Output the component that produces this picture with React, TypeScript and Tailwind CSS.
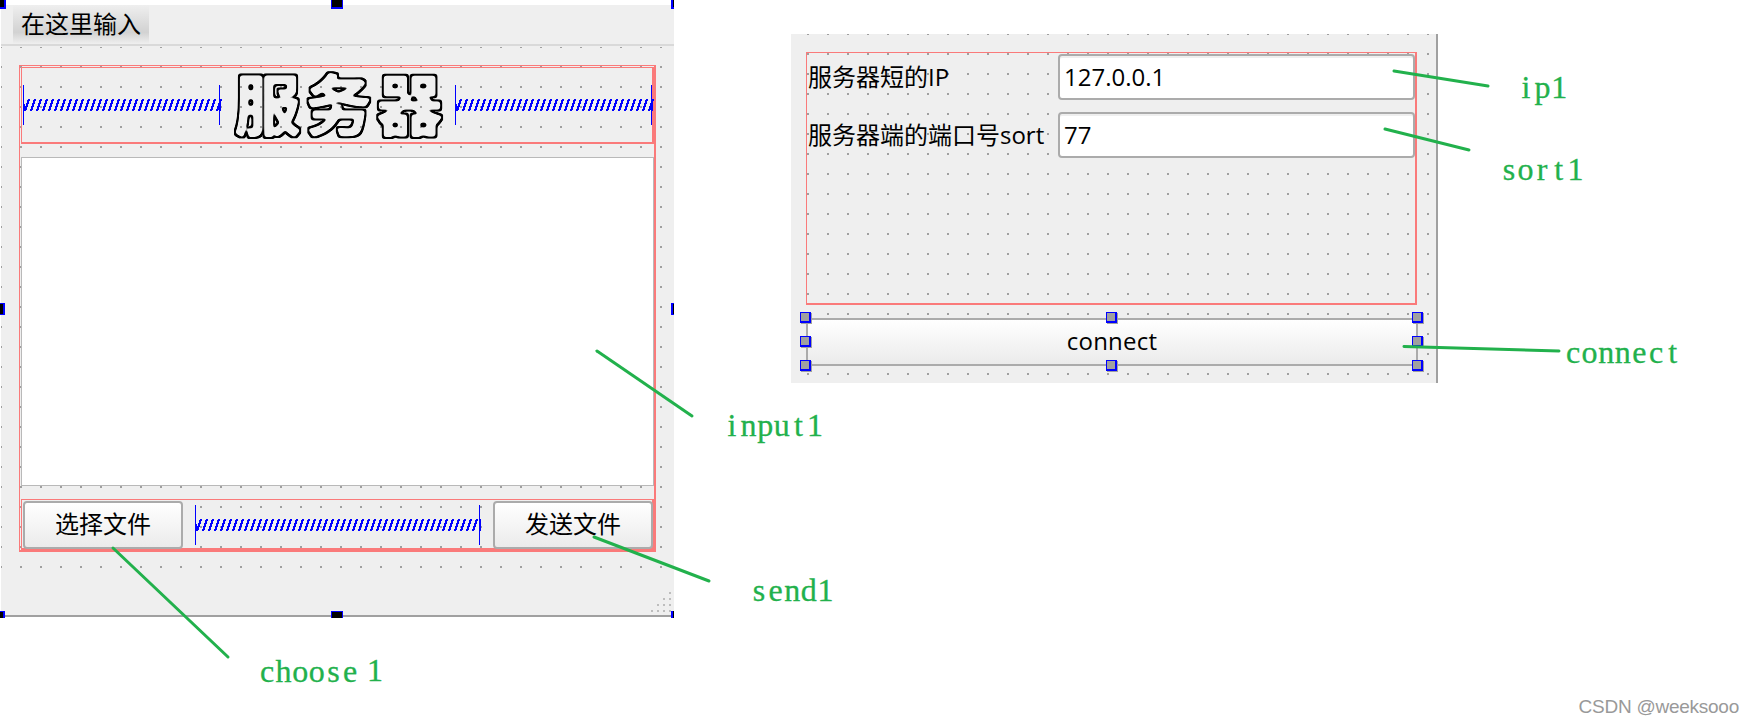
import React from 'react';

const UI_FONT = "font-['Open_Sans','Noto_Sans_CJK_SC',sans-serif]";
const DOTS = 'bg-[conic-gradient(at_2px_2px,transparent_75%,#a0a0a0_0)] bg-[length:20px_20px]';
const LAYOUT_BOX = 'border-t border-l border-r-2 border-b-2 border-[#fa7a7a]';

function Spacer({ width, className = '' }: { width: number; className?: string }) {
  const strokes: number[] = [];
  for (let x = 1; x < width - 3; x += 6) strokes.push(x);
  return (
    <svg
      className={`h-[40px] shrink-0 overflow-visible ${className}`}
      width={width}
      height={40}
      shapeRendering="crispEdges"
      stroke="#0000ff"
      fill="none"
    >
      <path d={`M0.5 0V40M${width - 0.5} 0V40`} strokeWidth="1" />
      <path d="M1 25V19" strokeWidth="1" />
      <path d={strokes.map((x) => `M${x + 1} 26L${x + 5} 14`).join('')} strokeWidth="2" />
      <path d={`M${width - 0.5} 14V26`} strokeWidth="2" />
    </svg>
  );
}

function PushButton({ children, className = '' }: { children: React.ReactNode; className?: string }) {
  return (
    <button
      className={`h-[48px] shrink-0 rounded-[4px] border-2 border-[#ababab] bg-linear-to-b from-white to-[#ebebeb] pb-[2px] text-center text-[24px] leading-[42px] text-black ${className}`}
    >
      {children}
    </button>
  );
}

function Field({ value }: { value: string }) {
  return (
    <div className="h-[46px] w-[358px] rounded-[4px] border-2 border-[#ababab] bg-white pl-[4px] text-[24px] leading-[41px] shadow-[inset_0_2px_0_#efefef]">
      {value}
    </div>
  );
}

function FormRow({ label, value }: { label: string; value: string }) {
  return (
    <div className="flex h-[46px] items-center">
      <span className="w-[251px] shrink-0 pl-px text-[24px] whitespace-nowrap">{label}</span>
      <Field value={value} />
    </div>
  );
}

function Handle({ className }: { className: string }) {
  return (
    <i
      className={`absolute h-[11px] w-[11px] border-t border-l border-r-2 border-b-2 border-[#0000ff] bg-[#a0a0a0] shadow-[1px_1px_0_#a0a0a0] ${className}`}
    />
  );
}

function FormHandle({ className }: { className: string }) {
  return <i className={`absolute border-[#0000ff] bg-black ${className}`} />;
}

function ServerForm() {
  return (
    <section className="relative ml-px mt-[5px] flex h-[612px] w-[673px] shrink-0 flex-col border-b-2 border-[#a0a0a0] bg-[#efefef]">
      <header className="flex h-[41px] shrink-0 items-start border-b-2 border-[#d9d9d9] pl-[12px]">
        <div className="h-[39px] w-[136px] bg-linear-to-b from-[#efefef] via-[#d2d2d2] via-70% to-[#efefef] pl-[8px] text-[24px] leading-[38px] whitespace-nowrap">
          在这里输入
        </div>
      </header>
      <div className={`mt-px h-[539px] shrink-0 pl-[18px] pt-[18px] bg-[position:-1px_-1px] ${DOTS}`}>
        <div className={`flex h-[487px] w-[637px] flex-col gap-[13px] pl-px pt-px ${LAYOUT_BOX}`}>
          <div className={`flex h-[77px] w-[633px] shrink-0 items-start pl-px ${LAYOUT_BOX}`}>
            <Spacer width={197} className="mt-[17px]" />
            <h1 className="-mt-[5px] flex h-[77px] w-[235px] shrink-0 items-center justify-center pl-[7px] font-['Noto_Sans_CJK_SC',sans-serif] text-[66px] leading-[77px] font-bold tracking-[5px] whitespace-nowrap [-webkit-text-stroke:1.2px_black] [filter:url(#hollow)]">
              服务器
            </h1>
            <Spacer width={197} className="mt-[17px]" />
          </div>
          <div className="h-[329px] w-[633px] shrink-0 border border-[#b9b9b9] bg-white" />
          <div className={`flex h-[51px] w-[633px] shrink-0 items-start pl-px pt-px ${LAYOUT_BOX}`}>
            <PushButton className="w-[160px]">选择文件</PushButton>
            <Spacer width={285} className="ml-[12px] mt-[4px]" />
            <PushButton className="ml-[13px] w-[160px]">发送文件</PushButton>
          </div>
        </div>
      </div>
      <svg className="absolute right-[2px] bottom-[2px]" width={21} height={21} fill="#bdbdbd" shapeRendering="crispEdges">
        <path d="M18 0h2v2h-2zM12 6h2v2h-2zM18 6h2v2h-2zM6 12h2v2h-2zM12 12h2v2h-2zM18 12h2v2h-2zM0 18h2v2h-2zM6 18h2v2h-2zM12 18h2v2h-2zM18 18h2v2h-2z" />
      </svg>
      <FormHandle className="-top-[5px] -left-px h-[9px] w-[6px] border-r-2 border-b-2" />
      <FormHandle className="-top-[5px] left-[330px] h-[9px] w-[12px] border-x border-b-2" />
      <FormHandle className="-top-[5px] right-0 h-[9px] w-[3px] border-b-2 border-l-2" />
      <FormHandle className="top-[298px] -left-px h-[12px] w-[5px] border-y border-r-2" />
      <FormHandle className="top-[298px] right-0 h-[12px] w-[3px] border-y border-l-2" />
      <FormHandle className="top-[606px] -left-px h-[7px] w-[5px] border-t border-r-2" />
      <FormHandle className="top-[606px] left-[330px] h-[7px] w-[12px] border-x border-t" />
      <FormHandle className="top-[606px] right-0 h-[7px] w-[3px] border-l-2" />
    </section>
  );
}

function ClientForm() {
  return (
    <section
      className={`relative mt-[34px] ml-[117px] h-[349px] w-[647px] shrink-0 border-r-2 border-[#a0a0a0] bg-[#efefef] bg-[position:16px_-1px] pt-[18px] pl-[15px] ${DOTS}`}
    >
      <div className={`flex h-[253px] w-[611px] flex-col gap-[12px] pt-px ${LAYOUT_BOX}`}>
        <FormRow label="服务器短的IP" value="127.0.0.1" />
        <FormRow label="服务器端的端口号sort" value="77" />
      </div>
      <div className="relative mt-[13px] h-[48px] w-[612px]">
        <PushButton className="w-full tracking-[0.2px]">connect</PushButton>
        <Handle className="-top-[6px] -left-[6px]" />
        <Handle className="-top-[6px] left-[300px]" />
        <Handle className="-top-[6px] left-[606px]" />
        <Handle className="top-[18px] -left-[6px]" />
        <Handle className="top-[18px] left-[606px]" />
        <Handle className="top-[42px] -left-[6px]" />
        <Handle className="top-[42px] left-[300px]" />
        <Handle className="top-[42px] left-[606px]" />
      </div>
    </section>
  );
}

const NOTES = [
  { text: 'input1', x: 732, y: 436, line: 'M597 351L692 416' },
  { text: 'choose', x: 267, y: 682, line: 'M113 548L228 657' },
  { text: '1', x: 375, y: 681, line: '' },
  { text: 'send1', x: 759, y: 601, line: 'M594 537L709 581' },
  { text: 'ip1', x: 1526, y: 98, line: 'M1394 71L1488 86' },
  { text: 'sort1', x: 1509, y: 180, line: 'M1385 129L1469 150' },
  { text: 'connect', x: 1573, y: 363, line: 'M1404 346.5L1559 351' },
];

const PITCH = 16.6;

function Annotations() {
  return (
    <svg className="pointer-events-none absolute top-0 left-0" width={1753} height={725}>
      <g stroke="#22b14c" strokeWidth="3" strokeLinecap="round">
        {NOTES.map((n) => n.line && <path key={n.text} d={n.line} />)}
      </g>
      <g
        fill="#22b14c"
        stroke="#22b14c"
        strokeWidth="0.3"
        textAnchor="middle"
        className="font-['Liberation_Serif',serif] text-[32px]"
      >
        {NOTES.map((n) => (
          <text key={n.text} x={n.text.split('').map((_, i) => n.x + i * PITCH).join(' ')} y={n.y}>
            {n.text}
          </text>
        ))}
      </g>
    </svg>
  );
}

export default function App() {
  return (
    <main className={`relative flex h-[725px] w-[1753px] items-start overflow-hidden bg-white text-black ${UI_FONT}`}>
      <svg className="absolute" width={0} height={0}>
        <filter id="hollow" x="-5%" y="-10%" width="110%" height="120%" colorInterpolationFilters="sRGB">
          <feGaussianBlur in="SourceAlpha" stdDeviation="1.5" result="soft" />
          <feComponentTransfer in="soft" result="inner">
            <feFuncA type="linear" slope="5" intercept="-1.9" />
          </feComponentTransfer>
          <feMorphology in="inner" operator="dilate" radius="2" result="outer" />
          <feComposite in="outer" in2="inner" operator="out" />
        </filter>
      </svg>
      <ServerForm />
      <ClientForm />
      <Annotations />
      <footer className="absolute top-[694px] right-[14px] font-['Liberation_Sans',sans-serif] text-[19px] leading-[26px] tracking-[-0.25px] whitespace-nowrap text-[#999999]">
        CSDN @weeksooo
      </footer>
    </main>
  );
}
